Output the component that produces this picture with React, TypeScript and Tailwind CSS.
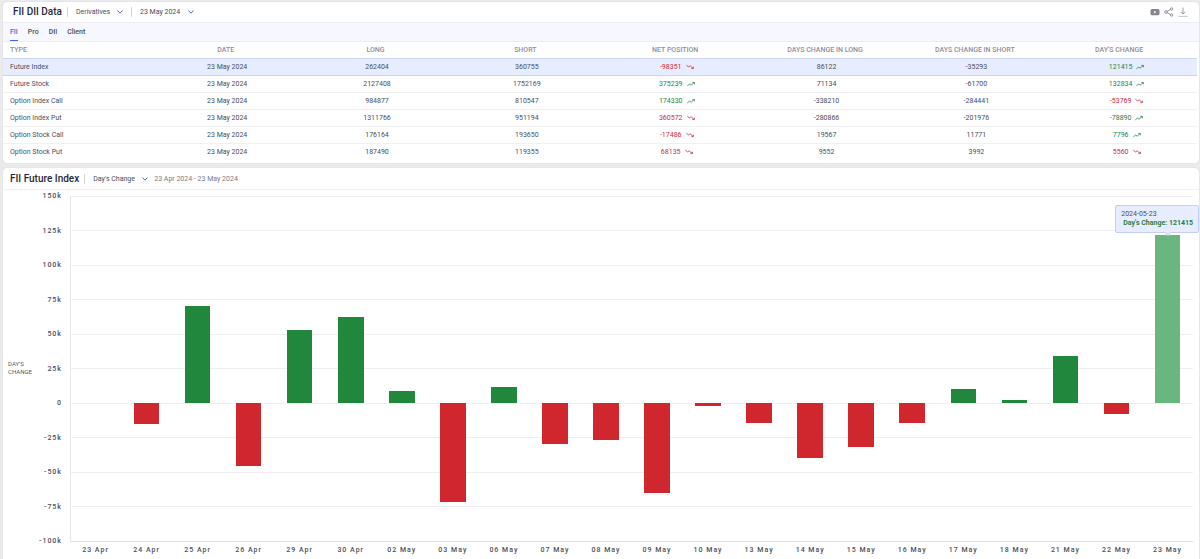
import { useState } from 'react';
import clsx from 'clsx';

type Row = {
  type: string;
  date: string;
  long: number;
  short: number;
  net: number;
  netUp: boolean;
  changeLong: number;
  changeShort: number;
  change: number;
  changeUp: boolean;
};

const DATE = '23 May 2024';

const rows: Row[] = [
  { type: 'Future Index', date: DATE, long: 262404, short: 360755, net: -98351, netUp: false, changeLong: 86122, changeShort: -35293, change: 121415, changeUp: true },
  { type: 'Future Stock', date: DATE, long: 2127408, short: 1752169, net: 375239, netUp: true, changeLong: 71134, changeShort: -61700, change: 132834, changeUp: true },
  { type: 'Option Index Call', date: DATE, long: 984877, short: 810547, net: 174330, netUp: true, changeLong: -338210, changeShort: -284441, change: -53769, changeUp: false },
  { type: 'Option Index Put', date: DATE, long: 1311766, short: 951194, net: 360572, netUp: false, changeLong: -280866, changeShort: -201976, change: -78890, changeUp: true },
  { type: 'Option Stock Call', date: DATE, long: 176164, short: 193650, net: -17486, netUp: false, changeLong: 19567, changeShort: 11771, change: 7796, changeUp: true },
  { type: 'Option Stock Put', date: DATE, long: 187490, short: 119355, net: 68135, netUp: false, changeLong: 9552, changeShort: 3992, change: 5560, changeUp: false },
];

const columns = ['Type', 'Date', 'Long', 'Short', 'Net position', 'Days change in long', 'Days change in short', "Day's change"];

const tabs = ['FII', 'Pro', 'DII', 'Client'];

// values in thousands of contracts
const series: [string, number][] = [
  ['23 Apr', 0],
  ['24 Apr', -15.5],
  ['25 Apr', 70.5],
  ['26 Apr', -45.7],
  ['29 Apr', 53],
  ['30 Apr', 62.2],
  ['02 May', 9],
  ['03 May', -72],
  ['06 May', 11.3],
  ['07 May', -30],
  ['08 May', -26.5],
  ['09 May', -65.5],
  ['10 May', -2],
  ['13 May', -14.8],
  ['14 May', -39.8],
  ['15 May', -32.2],
  ['16 May', -14.3],
  ['17 May', 10.5],
  ['18 May', 2],
  ['21 May', 34.2],
  ['22 May', -7.8],
  ['23 May', 121.4],
];

const MAX = 150;
const ticks = [150, 125, 100, 75, 50, 25, 0, -25, -50, -75, -100];

function Chevron() {
  return (
    <svg viewBox="0 0 6 4" className="pointer-events-none absolute right-0 h-1 w-1.5" fill="none" stroke="#4a63d8">
      <path d="M0.4 0.5 3 3.2 5.6 0.5" />
    </svg>
  );
}

function Trend({ up }: { up: boolean }) {
  return (
    <svg viewBox="0 0 8 6" className={clsx('h-1.5 w-2 shrink-0', !up && '-scale-y-100')} fill="none" stroke="currentColor" strokeWidth="0.8">
      <path d="M0.3 4.9 2.4 3.1 4.2 4.1 7 1.7" />
      <path d="M5.4 1.4H7.4V3.3" />
    </svg>
  );
}

function Signed({ value, up }: { value: number; up: boolean }) {
  return (
    <span className={clsx('inline-flex items-center gap-1', up ? 'text-[#2b8046]' : 'text-[#cc2a3c]')}>
      {value}
      <Trend up={up} />
    </span>
  );
}

function Select({ label, options, className }: { label: string; options: string[]; className: string }) {
  return (
    <div className={clsx('relative flex items-center', className)}>
      <select aria-label={label} className="w-full appearance-none bg-transparent text-[7px] leading-3 text-[#4a4d5c] outline-none">
        {options.map((o) => (
          <option key={o}>{o}</option>
        ))}
      </select>
      <Chevron />
    </div>
  );
}

function Divider() {
  return <span className="h-2.5 w-px bg-[#d3d4da]" />;
}

function DataPanel() {
  const [tab, setTab] = useState('FII');
  const [selected, setSelected] = useState(0);

  return (
    <section className="rounded-sm bg-white pb-[3px] shadow-[0_0_1px_#b9bac0]">
      <header className="flex h-5 items-center gap-2 pr-[11px] pl-2.5">
        <div className="flex items-center gap-[5px]">
          <h1 className="text-[10px] leading-3 font-medium text-[#25273a]">FII DII Data</h1>
          <Divider />
        </div>
        <Select label="Segment" options={['Derivatives', 'Cash']} className="w-[47px]" />
        <Divider />
        <Select label="Date" options={[DATE]} className="w-[54px]" />

        <div className="ml-auto flex items-center gap-1 text-[#85868d]">
          <button aria-label="Watch video">
            <svg viewBox="0 0 10 8" className="h-2 w-2.5">
              <rect x="0.5" y="0.9" width="9" height="6.4" rx="1.5" fill="currentColor" />
              <path d="M4.1 2.7 6.4 4.1 4.1 5.5Z" fill="#fff" />
            </svg>
          </button>
          <button aria-label="Share">
            <svg viewBox="0 0 10 10" className="h-2.5 w-2.5" fill="none" stroke="currentColor" strokeWidth="0.9">
              <path d="M3.2 4.3 6.4 2.6M3.2 5.7 6.4 7.4" />
              <circle cx="2" cy="5" r="1.3" />
              <circle cx="7.6" cy="2" r="1.2" />
              <circle cx="7.6" cy="8" r="1.2" />
            </svg>
          </button>
          <button aria-label="Download">
            <svg viewBox="0 0 10 10" className="h-2.5 w-2.5" fill="none" stroke="currentColor" strokeWidth="0.8">
              <path d="M5 0.6V7M2.8 4.9 5 7.1 7.2 4.9" />
              <path d="M0.3 9.4H9.7" strokeOpacity="0.6" />
            </svg>
          </button>
        </div>
      </header>

      <nav className="flex h-5 items-stretch gap-2.5 border-y border-[#ececf3] bg-[#f7f8fe] pl-[7px]">
        {tabs.map((t) => (
          <button
            key={t}
            onClick={() => setTab(t)}
            className={clsx(
              'border-b text-[7px] leading-4 font-medium',
              tab === t ? 'border-[#4a63d8] text-[#4a63d8]' : 'border-transparent text-[#4a4d5c]',
            )}
          >
            {t}
          </button>
        ))}
      </nav>

      <div className="pr-0.5">
        <table className="w-full table-fixed border-collapse text-[7px] text-[#4a4d5c]">
          <colgroup>
            <col className="w-[12.5%]" />
            <col className="w-[12.55%]" />
            <col className="w-[12.55%]" />
            <col className="w-[12.55%]" />
            <col className="w-[12.55%]" />
            <col className="w-[12.55%]" />
            <col className="w-[12.55%]" />
            <col />
          </colgroup>
          <thead>
            <tr className="h-4">
              {columns.map((c) => (
                <th
                  key={c}
                  className="pr-[3px] text-center text-[7px] leading-3 font-medium text-[#8f9097] uppercase first:pl-[7px] first:text-left last:pr-2.5"
                >
                  {c}
                </th>
              ))}
            </tr>
          </thead>
          <tbody>
            {rows.map((r, i) => (
              <tr
                key={r.type}
                onClick={() => setSelected(i)}
                className={clsx(
                  'h-[17px] text-center leading-3 last:border-b-0',
                  i === selected ? 'border-y border-[#cbd6f3] bg-[#e7edfe]' : 'border-b border-[#f1f1f4]',
                )}
              >
                <td className="pl-[7px] text-left">{r.type}</td>
                <td>{r.date}</td>
                <td>{r.long}</td>
                <td>{r.short}</td>
                <td><Signed value={r.net} up={r.netUp} /></td>
                <td>{r.changeLong}</td>
                <td>{r.changeShort}</td>
                <td className="pl-[5px]"><Signed value={r.change} up={r.changeUp} /></td>
              </tr>
            ))}
          </tbody>
        </table>
      </div>
    </section>
  );
}

function BarChart() {
  const n = series.length;

  return (
    <div className="flex pt-0.5 pr-1.5 pl-[5px]">
      <div className="mb-3 w-7 self-center text-[6px] leading-2 text-[#55565e]">
        DAY'S
        <br />
        CHANGE
      </div>
      <div className="mr-2 flex h-[353px] w-[26px] flex-col justify-between text-right text-[7px] leading-2 font-medium tracking-[1px] text-[#4e4f57]">
        {ticks.map((t) => (
          <span key={t}>{t === 0 ? '0' : `${t}k`}</span>
        ))}
      </div>

      <div className="min-w-0 flex-1 pt-1">
        <div className="relative h-[345px]">
          <svg viewBox={`0 0 ${n} 250`} preserveAspectRatio="none" className="h-full w-full overflow-visible" shapeRendering="crispEdges">
            {ticks.map((t) => (
              <line
                key={t}
                x1="0"
                x2={n}
                y1={MAX - t}
                y2={MAX - t}
                stroke={t === -100 ? '#dedfe2' : '#efeff1'}
                vectorEffect="non-scaling-stroke"
              />
            ))}
            <line x1="0" x2="0" y1="0" y2="250" stroke="#e6e6e9" vectorEffect="non-scaling-stroke" />
            {series.map(([day, v], i) => (
              <rect
                key={day}
                x={i + 0.25}
                y={MAX - Math.max(v, 0)}
                width="0.5"
                height={Math.abs(v)}
                fill={i === n - 1 ? '#6ab67f' : v < 0 ? '#cf272d' : '#20873c'}
              />
            ))}
          </svg>

          {/* tooltip of the hovered bar */}
          <div className="absolute top-[9px] -right-1.5 rounded-xs border border-[#c3d0f3] bg-[#e7edfe] px-[5px] py-1 text-[7px] leading-[9px] whitespace-nowrap">
            <div className="text-[#4a4d5c]">2024-05-23</div>
            <div className="pl-0.5 font-bold text-[#2b8046]">Day's Change: 121415</div>
            <span className="absolute right-7 -bottom-[3px] h-1 w-1 rotate-45 border-r border-b border-[#c3d0f3] bg-[#e7edfe]" />
          </div>
        </div>

        <div className="mt-1 grid grid-cols-[repeat(22,minmax(0,1fr))] text-center text-[7px] leading-[10px] font-medium tracking-[1px] text-[#4e4f57]">
          {series.map(([day]) => (
            <span key={day}>{day}</span>
          ))}
        </div>
      </div>
    </div>
  );
}

function ChartPanel() {
  return (
    <section className="flex-1 rounded-t-sm bg-white shadow-[0_0_1px_#b9bac0]">
      <header className="flex h-[22px] items-center gap-2 border-b border-[#f1f1f4] pl-[7px]">
        <div className="flex items-center gap-[5px]">
          <h2 className="text-[10px] leading-3 font-medium text-[#25273a]">FII Future Index</h2>
          <Divider />
        </div>
        <div className="flex items-center gap-1.5">
          <Select label="Metric" options={["Day's Change", 'Net position']} className="w-[55px]" />
          <span className="text-[7px] leading-3 text-[#7c7d85]">23 Apr 2024 - 23 May 2024</span>
        </div>
      </header>
      <BarChart />
    </section>
  );
}

export default function App() {
  return (
    <main className="flex min-h-screen flex-col gap-[5px] bg-[#ebebed] pt-0.5 pr-px pl-[3px] font-[Roboto,sans-serif]">
      <DataPanel />
      <ChartPanel />
    </main>
  );
}
